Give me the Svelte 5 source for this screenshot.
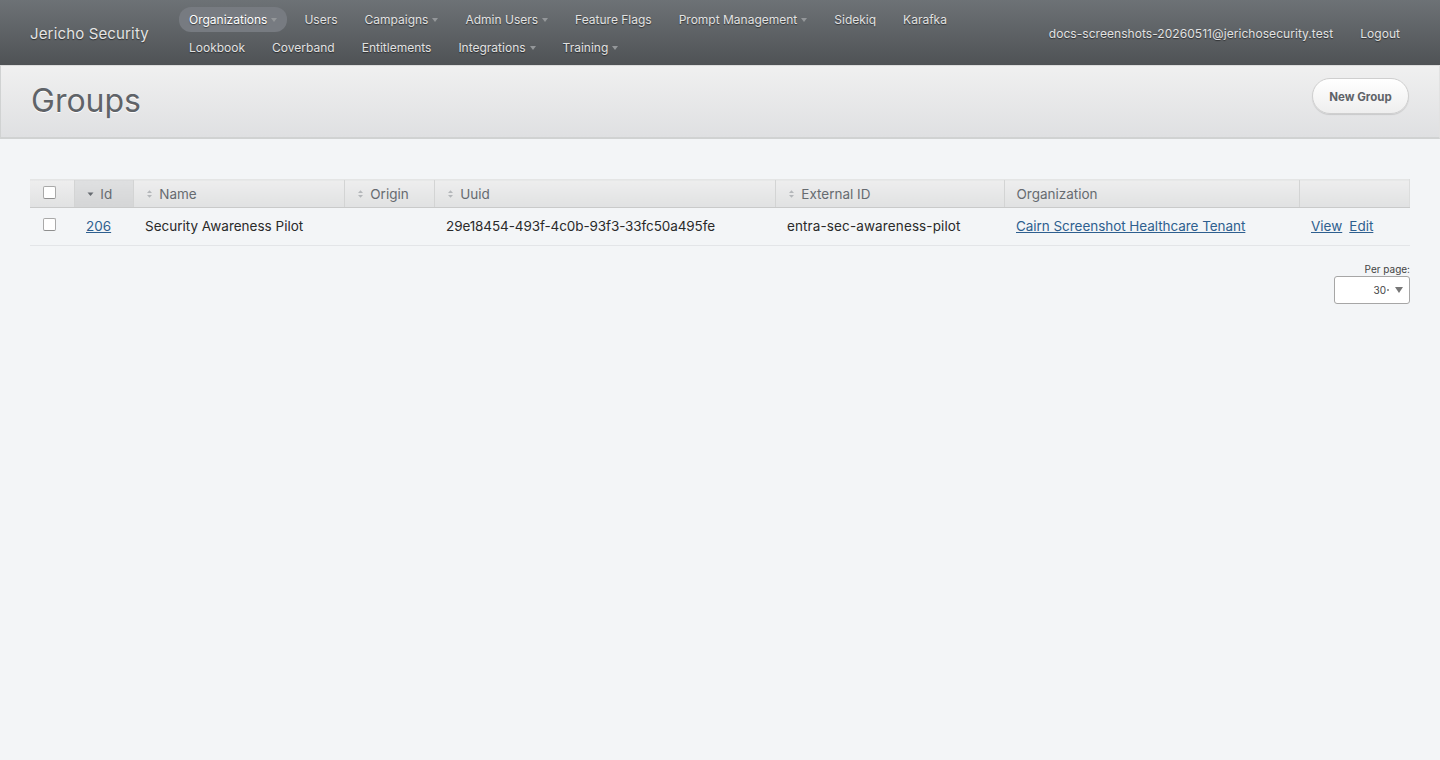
<script lang="ts">
  type Item = { label: string; caret?: boolean; active?: boolean };

  const navItems: Item[] = [
    { label: 'Organizations', caret: true, active: true },
    { label: 'Users' },
    { label: 'Campaigns', caret: true },
    { label: 'Admin Users', caret: true },
    { label: 'Feature Flags' },
    { label: 'Prompt Management', caret: true },
    { label: 'Sidekiq' },
    { label: 'Karafka' },
    { label: 'Lookbook' },
    { label: 'Coverband' },
    { label: 'Entitlements' },
    { label: 'Integrations', caret: true },
    { label: 'Training', caret: true },
  ];

  const columns = [
    { label: 'Id', sort: 'desc', cls: 'col-id' },
    { label: 'Name', sort: 'both', cls: 'col-name' },
    { label: 'Origin', sort: 'both', cls: 'col-origin' },
    { label: 'Uuid', sort: 'both', cls: 'col-uuid' },
    { label: 'External ID', sort: 'both', cls: 'col-ext' },
    { label: 'Organization', sort: '', cls: 'col-org' },
  ];
</script>

<header class="topbar">
  <a class="brand" href="#top">Jericho Security</a>
  <nav class="nav">
    {#each navItems as item}
      <a class="nav-item" class:active={item.active} href="#top">
        {item.label}{#if item.caret}<span class="caret"></span>{/if}
      </a>
    {/each}
  </nav>
  <div class="account">
    <a href="#top">docs-screenshots-20260511@jerichosecurity.test</a>
    <a href="#top">Logout</a>
  </div>
</header>

<section class="page-head">
  <h1>Groups</h1>
  <button class="new-btn" type="button">New Group</button>
</section>

<main class="content">
  <table class="table">
    <thead>
      <tr>
        <th class="col-check"><input type="checkbox" /></th>
        {#each columns as col}
          <th class={col.cls} class:sorted={col.sort === 'desc'}>
            {#if col.sort === 'desc'}
              <svg class="sort" width="7" height="10" viewBox="0 0 7 10"><path d="M0.5 3.5h6L3.5 7z" fill="#666b70" /></svg>
            {:else if col.sort === 'both'}
              <svg class="sort" width="7" height="10" viewBox="0 0 7 10"><path d="M1 4h5L3.5 1.2zM1 6h5L3.5 8.8z" fill="#b4b7ba" /></svg>
            {/if}
            {col.label}
          </th>
        {/each}
        <th class="col-actions"></th>
      </tr>
    </thead>
    <tbody>
      <tr>
        <td class="col-check"><input type="checkbox" /></td>
        <td><a href="#top">206</a></td>
        <td>Security Awareness Pilot</td>
        <td></td>
        <td class="uuid">29e18454-493f-4c0b-93f3-33fc50a495fe</td>
        <td class="external">entra-sec-awareness-pilot</td>
        <td class="org"><a href="#top">Cairn Screenshot Healthcare Tenant</a></td>
        <td class="actions"><a href="#top">View</a><a href="#top">Edit</a></td>
      </tr>
    </tbody>
  </table>

  <div class="per-page">
    <span class="per-label">Per page:</span>
    <div class="select"><span>30</span><i class="dot"></i><span class="arrow"></span></div>
  </div>
</main>

<style>
  :global(body) {
    background: #f3f5f7;
    font-family: Inter, "Noto Sans", sans-serif;
    color: #222;
  }

  a {
    text-decoration: none;
  }

  .topbar {
    display: flex;
    height: 65px;
    background: linear-gradient(#6d7276, #4f5255);
    color: #e6e6e6;
    text-shadow: 0 1px 1px rgba(0, 0, 0, 0.5);
  }

  .brand {
    width: 179px;
    padding: 24px 0 0 30px;
    box-sizing: border-box;
    color: #e4e4e4;
    font-size: 15px;
    line-height: 20px;
    letter-spacing: 0.15px;
  }

  .nav {
    display: flex;
    flex-wrap: wrap;
    align-content: flex-start;
    gap: 3px 7px;
    width: 800px;
    padding-top: 7px;
  }

  .nav-item {
    display: flex;
    align-items: center;
    height: 25px;
    padding: 0 10px;
    border-radius: 12px;
    color: #e2e2e2;
    font-size: 12px;
  }

  .nav-item.active {
    background: #777b81;
    color: #fff;
  }

  .caret {
    width: 0;
    height: 0;
    margin: 1px 0 0 4px;
    border: 3.5px solid transparent;
    border-top: 4px solid #94979a;
    border-bottom: 0;
  }

  .account {
    display: flex;
    gap: 27px;
    margin-left: auto;
    padding: 24px 40px 0 0;
    font-size: 12px;
    line-height: 20px;
    letter-spacing: 0.05px;
  }

  .account a {
    color: #e2e2e2;
  }

  .page-head {
    display: flex;
    justify-content: space-between;
    height: 71px;
    padding: 0 30px;
    background: linear-gradient(#f0f0f0, #dfe0e2);
    border: 1px solid #d0d2d2;
    border-top-color: #dcdcdc;
    border-bottom-width: 2px;
    border-right-color: #e2e2e2;
  }

  h1 {
    margin: 16px 0 0;
    color: #5f6368;
    font-size: 32px;
    font-weight: 400;
    line-height: 38px;
    text-shadow: 0 1px 0 #fff;
  }

  .new-btn {
    width: 97px;
    height: 36px;
    margin-top: 12px;
    padding-top: 2px;
    border: 1px solid #cfcfcf;
    border-radius: 18px;
    background: linear-gradient(#fff, #eeeeee);
    box-shadow: 0 1px 1px rgba(0, 0, 0, 0.12);
    color: #5f6368;
    font-family: inherit;
    font-size: 11.5px;
    font-weight: 700;
  }

  .content {
    padding: 40px 30px 0;
  }

  .table {
    width: 100%;
    border-collapse: collapse;
    table-layout: fixed;
    font-size: 13.5px;
  }

  th {
    height: 28px;
    padding: 0 12px;
    background: linear-gradient(#eeeeee, #e0e1e2);
    border-left: 1px solid #d3d4d4;
    border-top: 1px solid #e4e5e5;
    border-bottom: 1px solid #c9caca;
    color: #666b70;
    font-weight: 400;
    text-align: left;
    white-space: nowrap;
    box-sizing: border-box;
  }

  th:first-child {
    border-left: 0;
  }

  th:last-child {
    border-right: 1px solid #dcdddd;
  }

  th.sorted {
    background: linear-gradient(#dfe0e1, #d4d5d6);
  }

  .sort {
    margin-right: 3px;
    vertical-align: 0;
  }

  .col-check { width: 44px; padding: 0 0 0 13px; }
  .col-id { width: 59px; }
  .col-name { width: 211px; }
  .col-origin { width: 90px; }
  .col-uuid { width: 341px; }
  .col-ext { width: 229px; }
  .col-org { width: 295px; }

  th.col-check input {
    position: relative;
    top: -1px;
  }

  td {
    height: 38px;
    padding: 0 12px 1px;
    border-bottom: 1px solid #e3e5e8;
    color: #2a2a2a;
    box-sizing: border-box;
    white-space: nowrap;
  }

  td.col-check {
    padding: 0 0 5px 13px;
  }

  td a {
    color: #2e5f8f;
    text-decoration: underline;
  }

  .uuid {
    letter-spacing: -0.1px;
  }

  .external {
    letter-spacing: 0.12px;
  }

  .org {
    letter-spacing: -0.05px;
  }

  .actions a + a {
    margin-left: 7px;
  }

  input[type='checkbox'] {
    display: block;
    width: 13px;
    height: 13px;
    margin: 0;
    appearance: none;
    background: #fff;
    border: 1px solid #a9a9a9;
    border-bottom-color: #8f8f8f;
    border-radius: 2px;
  }

  .per-page {
    display: flex;
    flex-direction: column;
    align-items: flex-end;
    margin-top: 16px;
  }

  .per-label {
    color: #444;
    font-size: 10px;
    line-height: 14px;
  }

  .select {
    display: flex;
    align-items: center;
    justify-content: flex-end;
    width: 76px;
    height: 28px;
    padding-right: 6px;
    box-sizing: border-box;
    background: #fff;
    border: 1px solid #a6a6a6;
    border-radius: 3px;
    color: #444;
    font-size: 10px;
  }

  .dot {
    width: 2px;
    height: 2px;
    margin: 0 6px 0 1px;
    background: #999;
  }

  .arrow {
    width: 0;
    height: 0;
    border: 4px solid transparent;
    border-top: 6px solid #777;
    border-bottom: 0;
  }
</style>
